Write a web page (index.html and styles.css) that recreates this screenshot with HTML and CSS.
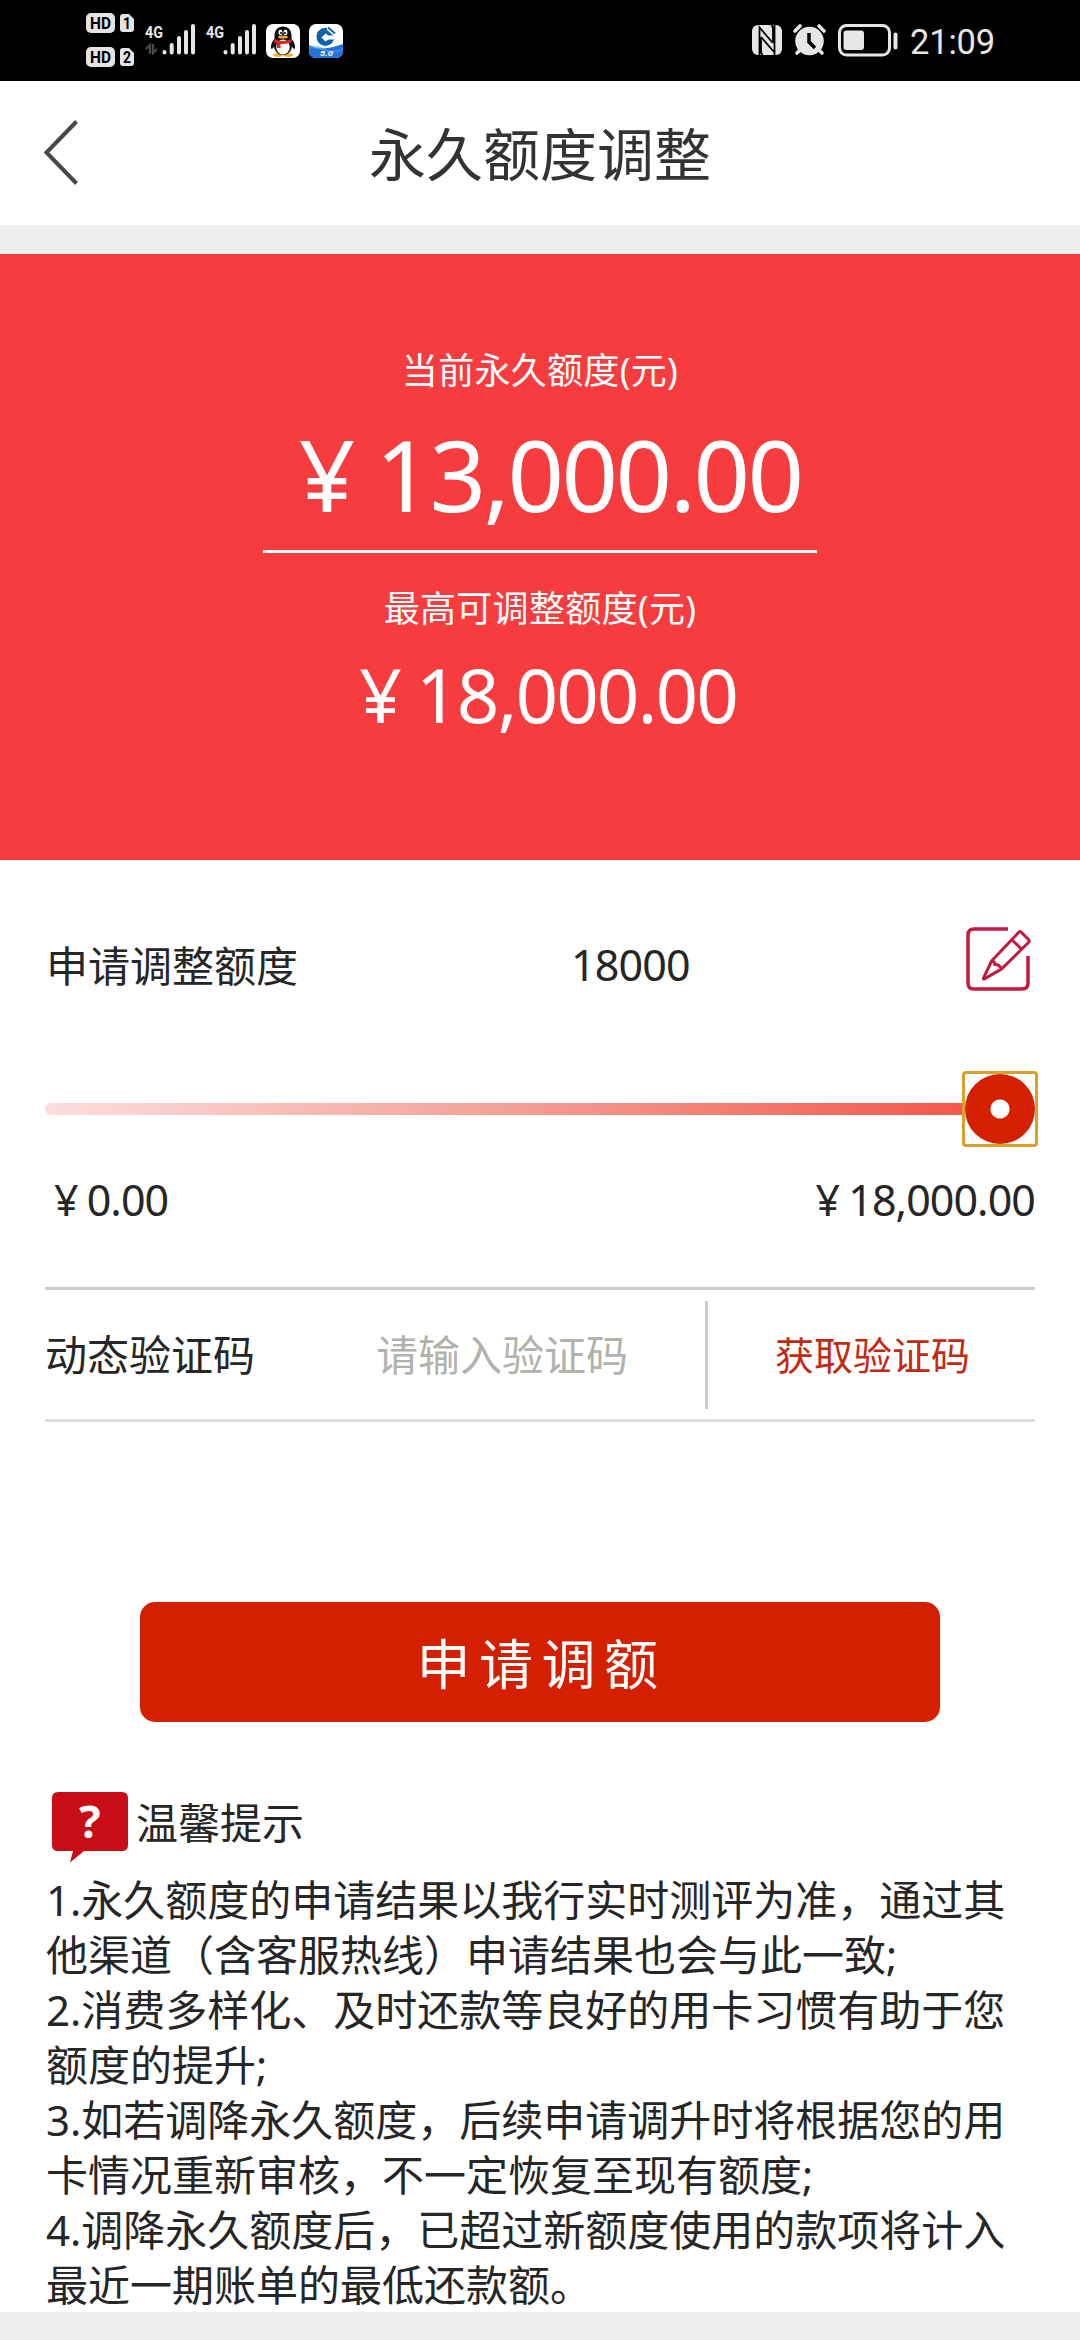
FILE: index.html
```html
<!DOCTYPE html>
<html lang="zh-CN">
<head>
<meta charset="utf-8">
<title>永久额度调整</title>
<link rel="stylesheet" href="styles.css">
</head>
<body>
<header class="status">
  <div class="status-left">
    <svg class="sims" width="49" height="54" viewBox="0 0 49 54">
      <g fill="#e4e4e4">
        <rect x="0" y="0" width="29" height="20" rx="5"/>
        <rect x="0" y="34" width="29" height="20" rx="5"/>
        <path d="M37 1h6l5 5v10q0 3-3 3h-8q-3 0-3-3V4q0-3 3-3zM37 35h6l5 5v10q0 3-3 3h-8q-3 0-3-3V38q0-3 3-3z"/>
      </g>
      <g class="sim-text">
        <text x="4" y="16" textLength="21" lengthAdjust="spacingAndGlyphs">HD</text>
        <text x="4" y="50" textLength="21" lengthAdjust="spacingAndGlyphs">HD</text>
        <text x="37" y="16" textLength="8" lengthAdjust="spacingAndGlyphs">1</text>
        <text x="37" y="50" textLength="8" lengthAdjust="spacingAndGlyphs">2</text>
      </g>
    </svg>
    <svg class="signal" width="51" height="32" viewBox="0 0 51 32">
      <text class="net" x="0" y="13.500" textLength="18" lengthAdjust="spacingAndGlyphs">4G</text>
      <path d="M5 30V21L1 25M8 20v9l4-4" stroke="#4a4a4a" stroke-width="2.200" fill="none"/>
      <g stroke="#e6e6e6" stroke-width="4" stroke-linecap="round"><path d="M19.500 28v.5M26.700 21v7.500M34 14v14.500M41 8v20.500M48 2v26.500"/></g>
    </svg>
    <svg class="signal" width="51" height="32" viewBox="0 0 51 32">
      <text class="net" x="0" y="13.500" textLength="18" lengthAdjust="spacingAndGlyphs">4G</text>
      <g stroke="#e6e6e6" stroke-width="4" stroke-linecap="round"><path d="M19.500 28v.5M26.700 21v7.500M34 14v14.500M41 8v20.500M48 2v26.500"/></g>
    </svg>
    <svg class="app" width="34" height="34" viewBox="0 0 34 34">
      <rect width="34" height="34" rx="7" fill="#fff"/>
      <ellipse cx="12" cy="31" rx="5" ry="1.800" fill="#f0a92c"/><ellipse cx="22" cy="31" rx="5" ry="1.800" fill="#f0a92c"/>
      <path d="M17 2.500c-5.500 0-8.500 4-8.500 9v3C6 18 4.500 21 5 24.500c1 1 2.500-.5 3-2C9 28 12 31 17 31s8-3 9-8.500c.5 1.500 2 3 3 2 .5-3.500-1-6.500-3.500-10v-3c0-5-3-9-8.500-9z" fill="#111"/>
      <ellipse cx="17" cy="23" rx="6.800" ry="7.500" fill="#fff"/>
      <ellipse cx="14.500" cy="8.500" rx="1.900" ry="2.800" fill="#fff"/><ellipse cx="19.500" cy="8.500" rx="1.900" ry="2.800" fill="#fff"/>
      <circle cx="15" cy="9" r="1"/><circle cx="19" cy="9" r="1"/>
      <ellipse cx="17" cy="13" rx="5" ry="1.600" fill="#f0a92c"/>
      <path d="M8.500 15q8.500 4 17 0l.5 3q-5 2.500-11.500 2v4h-3.500v-4.500q-2-.5-3-1.500z" fill="#dc2420"/>
    </svg>
    <svg class="app" width="34" height="34" viewBox="0 0 34 34">
      <rect width="34" height="34" rx="7" fill="#fff"/>
      <path d="M0 21q6 4 14 3.500T34 20v7q0 7-7 7H7q-7 0-7-7z" fill="#2474d8"/>
      <path d="M0 22q8-1 17 3t17-1v2q-9 5-18 1T0 25z" fill="#4f9af0" opacity=".6"/>
      <path d="M18 4A9 9 0 1 0 25 15.500H19.500L16.500 17.500 12.500 13.500 16.500 9.500 19.500 11.500H24.500L18 6z" fill="#1162ad"/>
      <path d="M19 3.500l7 6" fill="none" stroke="#1162ad" stroke-width="2"/>
      <text class="version" x="11" y="31.500" textLength="13" lengthAdjust="spacingAndGlyphs">5.0</text>
    </svg>
  </div>
  <div class="status-right">
    <svg class="nfc" width="30" height="30" viewBox="0 0 30 30">
      <rect width="30" height="30" rx="6" fill="#e6e6e6"/>
      <path d="M7.500 30V2.500L20 17q1 1 1-1V4q0-3-2-4M22.500 30V27.500L10 13q-1-1-1 1v12q0 3 2 4M22.500 28V0" fill="none" stroke="#000" stroke-width="1.800"/>
    </svg>
    <svg class="alarm" width="33" height="32" viewBox="0 0 33 32">
      <circle cx="16.500" cy="17" r="14.300" fill="#e6e6e6"/>
      <path d="M2 7l5-5M31 7l-5-5M4 29l5-5M29 29l-5-5" stroke="#e6e6e6" stroke-width="3.600" stroke-linecap="round"/>
      <path d="M16 9v9l6 6" fill="none" stroke="#000" stroke-width="3.500"/>
    </svg>
    <svg class="battery" width="60" height="32" viewBox="0 0 60 32">
      <rect x="1.500" y="1.500" width="50" height="29.500" rx="7" fill="none" stroke="#e6e6e6" stroke-width="3"/>
      <rect x="5.500" y="6.500" width="20.500" height="19.500" rx="3" fill="#e6e6e6"/>
      <rect x="55.500" y="8.500" width="4" height="17" rx="2" fill="#e6e6e6"/>
    </svg>
    <span class="time">21:09</span>
  </div>
</header>

<nav class="titlebar">
  <svg class="back" width="36" height="68" viewBox="0 0 36 68"><path d="M33.500 2.500L3.500 33.500l30 31" fill="none" stroke="#484848" stroke-width="4"/></svg>
  <h1 class="title">永久额度调整</h1>
</nav>

<section class="limits">
  <p class="limit-label">当前永久额度(元)</p>
  <p class="limit-current"><span class="yen">¥</span>13,000.00</p>
  <p class="limit-label limit-label-max">最高可调整额度(元)</p>
  <p class="limit-max"><span class="yen">¥</span>18,000.00</p>
</section>

<main class="form">
  <div class="amount-row">
    <span class="amount-label">申请调整额度</span>
    <span class="amount-value">18000</span>
    <svg class="edit" width="66" height="66" viewBox="0 0 66 66" fill="none" stroke="#c31840" stroke-width="3.500">
      <path d="M43 3H9Q3 3 3 9v48q0 6 6 6h48q6 0 6-6V30"/>
      <path d="M56 6l7.500 7.500q1.500 1.500 0 3L36.500 43 19 53q-1 .3-.5-1L26.500 35 54 6q1-1 2 0zM46.500 13.500l10 9.500M26.500 35q3 0 3.500 3.500 4.500 0 6.500 4.500" stroke-width="3"/>
    </svg>
  </div>
  <div class="slider">
    <div class="track"></div>
    <div class="thumb"><div class="knob"></div></div>
  </div>
  <div class="range">
    <span><span class="yen">¥</span>0.00</span>
    <span><span class="yen">¥</span>18,000.00</span>
  </div>
  <div class="code-row">
    <span class="code-label">动态验证码</span>
    <span class="code-input">请输入验证码</span>
    <span class="code-send">获取验证码</span>
  </div>
  <button class="submit">申请调额</button>
  <div class="tips-head">
    <svg class="tips-icon" width="77" height="71" viewBox="0 0 77 71">
      <path d="M6 0h64q6 0 6 6v47q0 6-6 6H32L18 70.500 21 59H6q-6 0-6-6V6q0-6 6-6z" fill="#c90d17"/>
      <text class="question" x="38" y="46">?</text>
    </svg>
    <span>温馨提示</span>
  </div>
  <p class="tips">1.永久额度的申请结果以我行实时测评为准，通过其<br>他渠道（含客服热线）申请结果也会与此一致;<br>2.消费多样化、及时还款等良好的用卡习惯有助于您<br>额度的提升;<br>3.如若调降永久额度，后续申请调升时将根据您的用<br>卡情况重新审核，不一定恢复至现有额度;<br>4.调降永久额度后，已超过新额度使用的款项将计入<br>最近一期账单的最低还款额。</p>
</main>
</body>
</html>
```

FILE: styles.css
```css
* {
  box-sizing: border-box;
}

body {
  margin: 0;
  width: 1080px;
  height: 2340px;
  overflow: hidden;
  background: #eee;
  color: #262626;
  font-family: "Noto Sans", "Noto Sans CJK SC", sans-serif;
  font-size: 42px;
  display: flex;
  flex-direction: column;
}

p,
h1 {
  margin: 0;
  font-weight: 400;
  white-space: nowrap;
}

svg {
  display: block;
  flex: none;
  overflow: visible;
}

/* status bar */
.status {
  height: 81px;
  background: #000;
  display: flex;
  justify-content: space-between;
  padding: 0 86px;
}

.status-left,
.status-right {
  display: flex;
  align-items: flex-start;
}

.sims {
  margin-top: 13px;
}

.sim-text {
  font: 700 17px Roboto, sans-serif;
  fill: #000;
}

.signal {
  margin: 24px 0 0 10px;
}

.net {
  font: 700 17px Roboto, sans-serif;
  fill: #e6e6e6;
}

.app {
  margin: 24px 0 0 9px;
}

.version {
  font: italic 700 8px Roboto, sans-serif;
  fill: #fff;
}

.nfc {
  margin-top: 25px;
}

.alarm {
  margin: 24px 0 0 11px;
}

.battery {
  margin: 24px 0 0 12px;
}

.time {
  margin-left: 12px;
  color: #e6e6e6;
  font-family: Roboto, sans-serif;
  font-size: 34.500px;
  letter-spacing: -0.2px;
  line-height: 84px;
  width: 84px;
  white-space: nowrap;
}

/* title bar */
.titlebar {
  height: 144px;
  background: #fff;
  display: grid;
  grid-template-columns: 1fr auto 1fr;
  align-items: center;
  padding: 0 43px;
}

.title {
  font-size: 57px;
  line-height: 80px;
  padding-top: 2px;
  color: #333;
  grid-column: 2;
}

/* limits panel */
.limits {
  margin-top: 29px;
  height: 606px;
  background: #f63c3e;
  color: #fff;
  display: flex;
  flex-direction: column;
  align-items: center;
}

.limit-label {
  font-size: 36px;
  line-height: 50px;
  letter-spacing: 0.3px;
  margin-top: 92px;
}

.limit-current,
.limit-max {
  letter-spacing: -0.026em;
}

.limit-current {
  width: 554px;
  height: 157px;
  border-bottom: 3px solid #fff;
  font-size: 99px;
  line-height: 156px;
  text-align: center;
}

.limit-current .yen {
  padding-right: 2px;
}

.limit-label-max {
  margin-top: 31px;
}

.limit-max {
  font-size: 74.500px;
  line-height: 120px;
}

.yen {
  display: inline-block;
  width: 0.98em;
  text-align: center;
}

/* form */
.form {
  height: 1452px;
  background: #fff;
  padding: 0 45px;
}

.amount-row {
  height: 211px;
  display: grid;
  grid-template-columns: 525px 1fr auto;
  align-items: center;
  padding: 0 4px 0 1px;
}

.amount-label,
.code-label,
.code-input {
  padding-bottom: 4px;
}

.amount-value {
  font-size: 43px;
  letter-spacing: -0.02em;
  padding-bottom: 2px;
}

.edit {
  margin-top: -14px;
}

.slider {
  height: 76px;
  display: flex;
  align-items: center;
  margin-right: -3px;
}

.track {
  flex: 1;
  height: 12px;
  border-radius: 6px 0 0 6px;
  background: linear-gradient(to right, #fbdedd, #f4a096 50%, #f3584b);
}

.thumb {
  width: 76px;
  height: 76px;
  border: 3px solid #d9a02c;
  border-radius: 4px;
  display: flex;
}

.knob {
  width: 70px;
  height: 70px;
  border-radius: 50%;
  background: radial-gradient(circle, #fff 9px, #d42000 10px);
}

.range {
  display: flex;
  justify-content: space-between;
  margin-top: 23px;
  font-size: 43px;
  line-height: 60px;
  letter-spacing: -0.022em;
}

.range .yen {
  width: 0.97em;
}

.code-row {
  margin-top: 57px;
  height: 135px;
  border-top: 3px solid #ccc;
  border-bottom: 3px solid #ddd;
  display: grid;
  grid-template-columns: 331px 329px 1fr;
  align-items: center;
}

.code-input {
  color: #b2b2ac;
}

.code-send {
  height: 108px;
  line-height: 108px;
  border-left: 3px solid #ccc;
  padding-left: 67px;
  font-size: 39px;
  color: #c42a12;
}

.submit {
  display: block;
  width: 800px;
  height: 120px;
  margin: 180px auto 0;
  border: 0;
  border-radius: 15px;
  padding: 0 0 2px 3px;
  background: #d42000;
  color: #fff;
  font: inherit;
  font-size: 54px;
  letter-spacing: 8.500px;
}

.tips-head {
  display: flex;
  align-items: flex-start;
  gap: 7px;
  margin-top: 70px;
  padding-left: 7px;
  height: 80px;
  line-height: 62px;
}

.question {
  font: 700 45px "Open Sans", sans-serif;
  fill: #fff;
  text-anchor: middle;
}

.tips {
  line-height: 55px;
  padding-left: 1px;
}
```
